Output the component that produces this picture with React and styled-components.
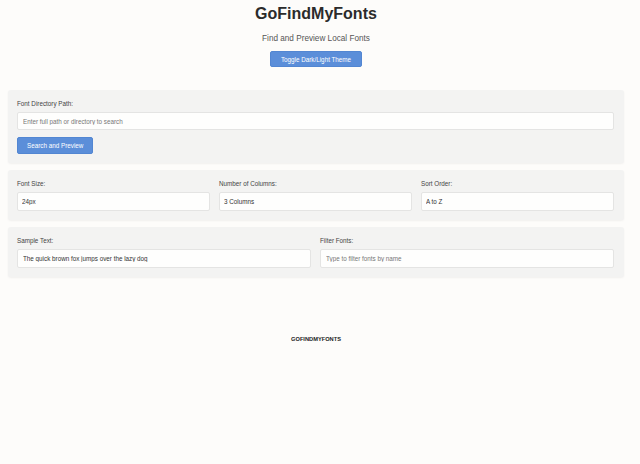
import React from "react";
import styled, { createGlobalStyle } from "styled-components";

const Global = createGlobalStyle`
  html, body { margin: 0; padding: 0; background: #fdfcfa; }
  body { font-family: "Liberation Sans", Arial, sans-serif; color: #333; }
  * { box-sizing: border-box; }
`;

const Page = styled.div`
  margin: 0 16px 0 8px;
  min-height: 464px;
  display: flex;
  flex-direction: column;
`;

const Header = styled.header`
  display: flex;
  flex-direction: column;
  align-items: center;
  padding-top: 5px;
`;

const Title = styled.h1`
  margin: 0;
  font-size: 16px;
  line-height: 18px;
  font-weight: 700;
  color: #2b2b2b;
`;

const Subtitle = styled.p`
  margin: 11px 0 0;
  font-size: 8.2px;
  line-height: 10px;
  color: #555;
`;

const Button = styled.button`
  font-family: inherit;
  font-size: 6.3px;
  color: #fff;
  background: #5b8ed9;
  border: 1px solid #5286d2;
  border-radius: 2px;
  height: ${(p) => p.$h || 17}px;
  padding: 0 ${(p) => p.$px || 10}px;
  cursor: pointer;
  align-self: ${(p) => p.$align || "auto"};
  white-space: nowrap;
`;

const ThemeButton = styled(Button)`
  margin-top: 7px;
`;

const Panels = styled.main`
  display: flex;
  flex-direction: column;
  gap: 7px;
  margin-top: 23px;
`;

const Panel = styled.section`
  background: #f3f3f2;
  border-radius: 3px;
  box-shadow: 0 1px 2px rgba(0, 0, 0, 0.05);
  padding: 9px 10px 9px 9px;
  display: flex;
  flex-direction: column;
  gap: 7px;
`;

const Grid = styled.div`
  display: grid;
  grid-template-columns: repeat(${(p) => p.$cols}, 1fr);
  gap: 9px;
`;

const Field = styled.label`
  display: flex;
  flex-direction: column;
  gap: 3px;
`;

const Label = styled.span`
  font-size: 6.3px;
  line-height: 10px;
  color: #444;
`;

const Input = styled.input`
  font-family: inherit;
  font-size: 6.3px;
  color: #333;
  background: #fefefd;
  border: 1px solid #e4e4e3;
  border-radius: 2px;
  height: ${(p) => p.$h || 18}px;
  padding: 0 5px;
  width: 100%;
  outline: none;
  &::placeholder { color: #777; }
`;

const Select = styled.select`
  font-family: inherit;
  font-size: 6.3px;
  color: #333;
  background: #fefefd;
  border: 1px solid #e4e4e3;
  border-radius: 2px;
  height: 19px;
  padding: 0 4px;
  width: 100%;
  appearance: none;
  -webkit-appearance: none;
  outline: none;
`;

const Footer = styled.footer`
  margin-top: 58px;
  text-align: center;
  font-size: 5.7px;
  font-weight: 700;
  color: #222;
  line-height: 8px;
`;

export default function App() {
  return (
    <>
      <Global />
      <Page>
        <Header>
          <Title>GoFindMyFonts</Title>
          <Subtitle>Find and Preview Local Fonts</Subtitle>
          <ThemeButton $h={16} $px={10}>Toggle Dark/Light Theme</ThemeButton>
        </Header>
        <Panels>
          <Panel>
            <Field>
              <Label>Font Directory Path:</Label>
              <Input placeholder="Enter full path or directory to search" />
            </Field>
            <Button $align="flex-start" $px={9}>Search and Preview</Button>
          </Panel>
          <Panel>
            <Grid $cols={3}>
              <Field>
                <Label>Font Size:</Label>
                <Select defaultValue="24px">
                  <option>24px</option>
                </Select>
              </Field>
              <Field>
                <Label>Number of Columns:</Label>
                <Select defaultValue="3 Columns">
                  <option>3 Columns</option>
                </Select>
              </Field>
              <Field>
                <Label>Sort Order:</Label>
                <Select defaultValue="A to Z">
                  <option>A to Z</option>
                </Select>
              </Field>
            </Grid>
          </Panel>
          <Panel>
            <Grid $cols={2}>
              <Field>
                <Label>Sample Text:</Label>
                <Input $h={19} defaultValue="The quick brown fox jumps over the lazy dog" />
              </Field>
              <Field>
                <Label>Filter Fonts:</Label>
                <Input $h={19} placeholder="Type to filter fonts by name" />
              </Field>
            </Grid>
          </Panel>
        </Panels>
        <Footer>GOFINDMYFONTS</Footer>
      </Page>
    </>
  );
}
